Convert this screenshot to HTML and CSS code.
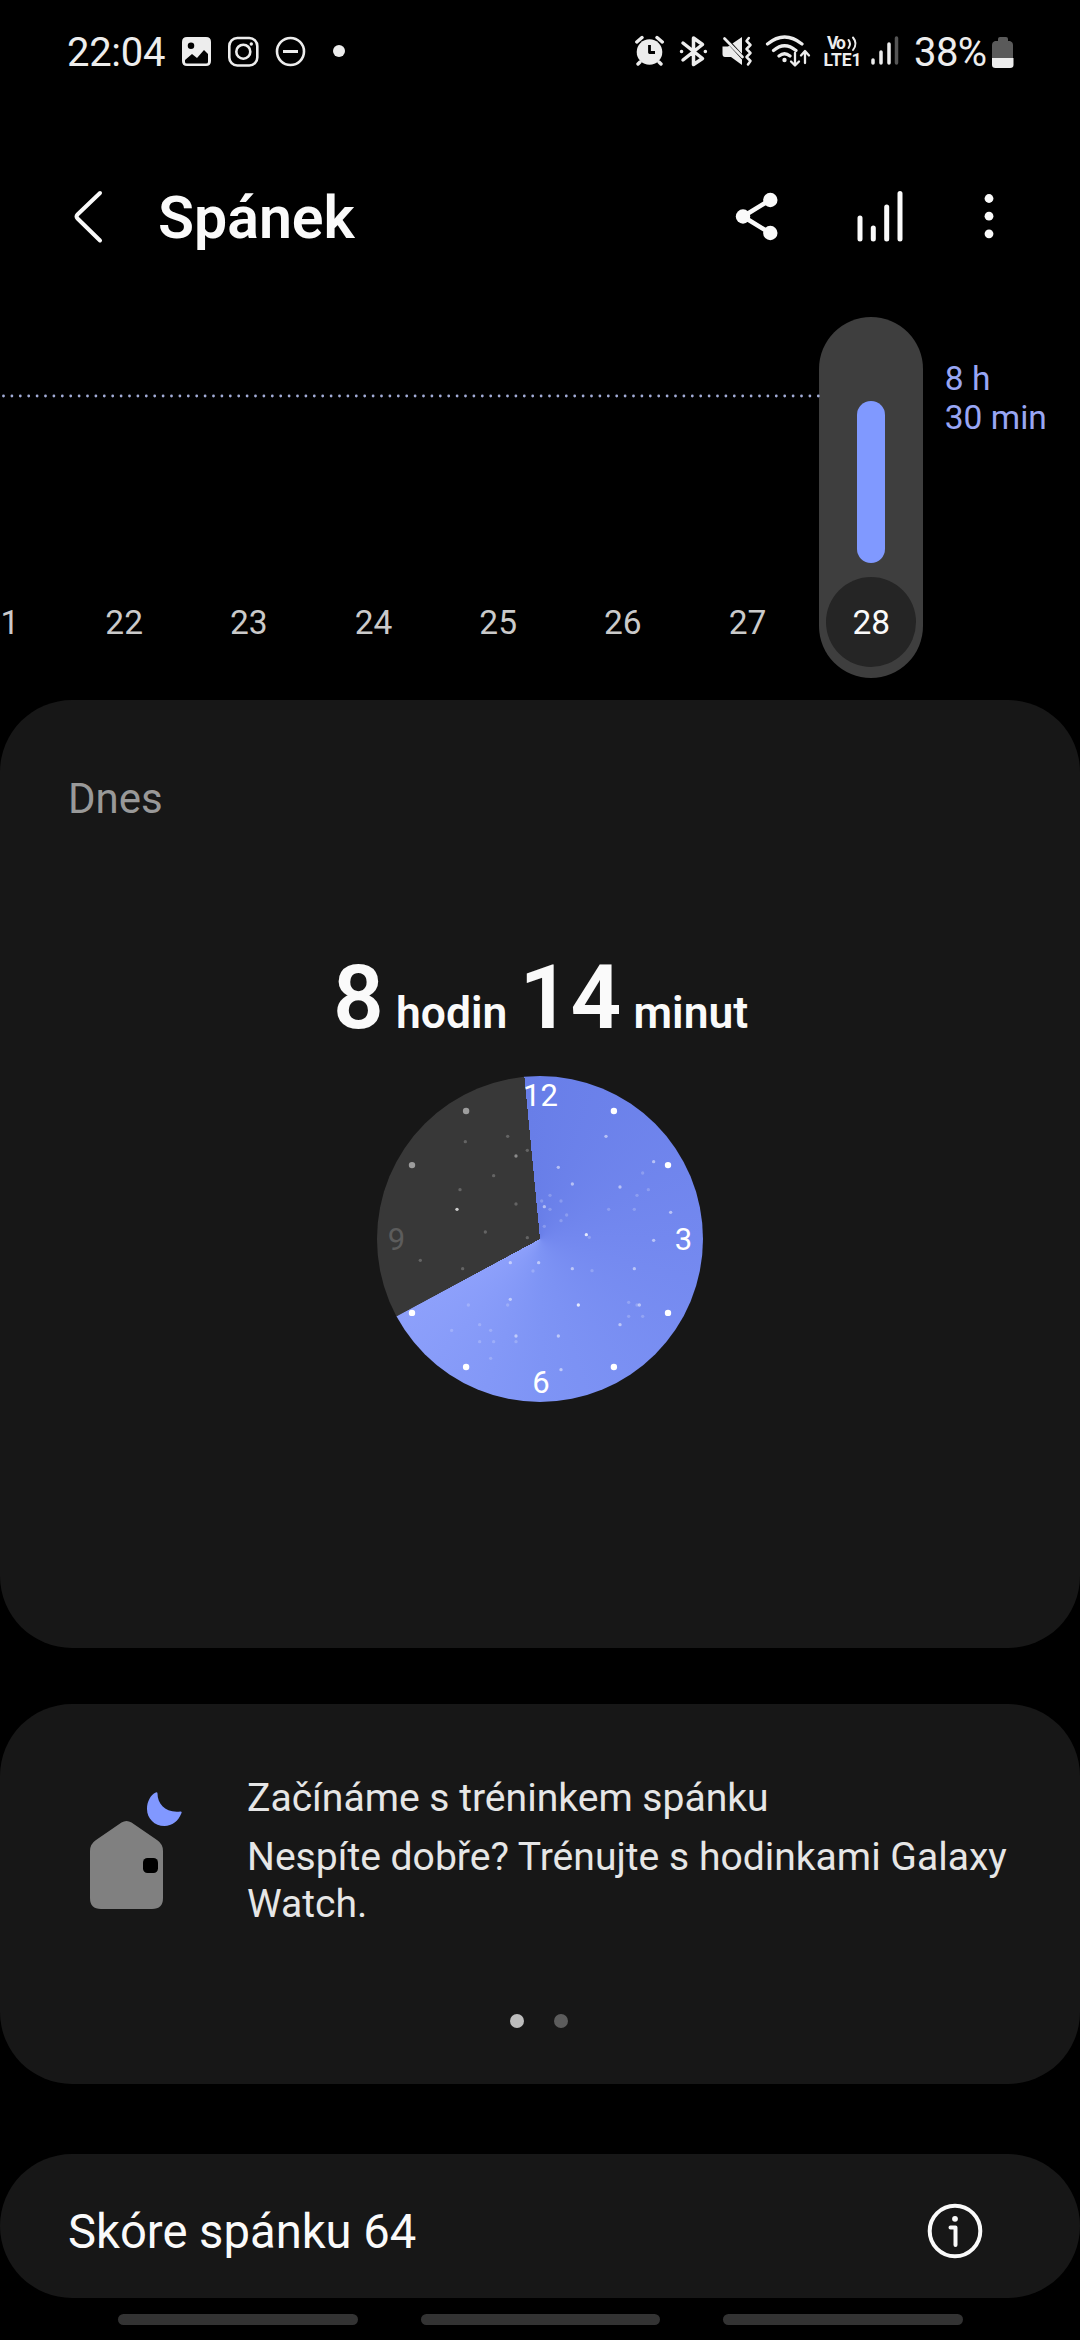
FILE: index.html
```html
<!DOCTYPE html>
<html lang="cs">
<head>
<meta charset="utf-8">
<title>Spánek</title>
<link rel="stylesheet" href="styles.css">
</head>
<body>
<div class="screen">
  <header class="status">
    <span class="status-time">22:04</span>
    <svg class="notif-icons" width="174" height="40" viewBox="0 0 174 40" fill="none" stroke="#ededed" stroke-width="2.6">
      <path fill="#ededed" stroke="none" fill-rule="evenodd" d="M5 4H24Q29 4 29 9V28Q29 33 24 33H5Q0 33 0 28V9Q0 4 5 4ZM9 9.500A3.200 3.200 0 1 0 9 16A3.200 3.200 0 1 0 9 9.500ZM3 27V29Q3 30.500 5 30.500H24Q26 30.500 26 29V21L22 17L15 25L10 21Z"/>
      <rect x="47.300" y="5" width="28" height="27.500" rx="8"/>
      <circle cx="61.300" cy="18.700" r="7"/>
      <circle cx="69.300" cy="11" r="1.700" fill="#ededed" stroke="none"/>
      <circle cx="108.500" cy="18.500" r="13.500"/>
      <path d="M101 18.500H116" stroke-width="3"/>
      <circle cx="157" cy="18" r="6" fill="#ededed" stroke="none"/>
    </svg>
    <svg class="system-icons" width="270" height="40" viewBox="0 0 270 40" fill="none" stroke="#ededed" stroke-width="3" stroke-linecap="round" stroke-linejoin="round">
      <g>
        <circle cx="14.500" cy="19" r="12.800" fill="#ededed" stroke="none"/>
        <path d="M1.800 9L7 4.500M27.300 9L22 4.500M5 29L3 31M24 29L26 31" stroke-width="3.400"/>
        <path d="M14.500 12V19.500H20" stroke="#000" stroke-width="2.800" stroke-linecap="butt"/>
      </g>
      <path d="M48 10L67.500 25.500L58.500 31.500V5L67.500 11.500L48 27M46.500 18.500H46.600M70.300 18.500H70.400" stroke-width="3.500"/>
      <g>
        <path d="M87.500 13.500H93L107 4V32L96 24H90Q87.500 24 87.500 21Z" fill="#ededed" stroke="none"/>
        <path d="M89.500 4.500L110 27" stroke="#000" stroke-width="4" stroke-linecap="butt"/>
        <path d="M89.500 5.500L107.500 24" stroke-width="2.700"/>
        <path d="M113.800 5L111.500 8L115.500 12L111.500 16L115.500 20L111.500 24L115.500 28L113 31.500" stroke-width="2.500"/>
      </g>
      <g stroke-width="3.200">
        <path d="M132.500 11Q149.500 -3 167 11M138.500 17.500Q149.500 8 161 17.500M144 23Q149.500 18.500 155 23"/>
        <circle cx="149.500" cy="27" r="2.200" fill="#ededed" stroke="none"/>
        <path d="M160 20V32M156 28.500L160 32.500L164 28.500M170 30V19M166 22.500L170 18L174 22.500" stroke-width="2.300"/>
      </g>
      <g fill="#ededed" stroke="none" class="volte">
        <text x="192" y="16" font-size="17.500" textLength="19">Vo</text>
        <text x="188.500" y="33" font-size="17.500" textLength="38">LTE1</text>
      </g>
      <path d="M213.500 7Q216.500 10.500 213.500 15M218 4.500Q223 10.500 218 17" stroke-width="2"/>
      <path d="M238 27V30M246 19V30M254 11V30" stroke-width="3.500"/>
      <path d="M261.500 5V30" stroke="#555" stroke-width="3.500"/>
    </svg>
    <span class="status-battery">38%</span>
    <svg width="22" height="32" viewBox="0 0 22 32"><path fill="#5a5a5a" d="M6 4V2Q6 0 8 0H14Q16 0 16 2V4H18Q21 5 21 8V21H0V8Q0 5 3 4Z"/><path fill="#ededed" d="M0 21H21.500V28Q21.500 31 18 31H3.500Q0 31 0 28Z"/></svg>
  </header>

  <nav class="appbar">
    <svg class="back" width="34" height="60" viewBox="0 0 34 60" fill="none" stroke="#fafafa" stroke-width="4" stroke-linecap="round" stroke-linejoin="round"><path d="M29 6L6.500 27.500Q4.500 29.500 6.500 31.500L29 53.500"/></svg>
    <h1>Spánek</h1>
    <svg class="share" width="44" height="60" viewBox="0 0 44 60" fill="#fafafa"><path d="M35 13L8 29.500L35 46" fill="none" stroke="#fafafa" stroke-width="4.600"/><circle cx="35.300" cy="13" r="7.200"/><circle cx="8" cy="29.500" r="7.200"/><circle cx="35.300" cy="46" r="7.200"/></svg>
    <svg class="bars" width="48" height="60" viewBox="0 0 48 60" stroke="#fafafa" stroke-width="5" stroke-linecap="round"><path d="M3 31V52M16.300 41V52M29.700 20V52M43 6.500V52"/></svg>
    <svg class="more" width="12" height="60" viewBox="0 0 12 60" fill="#fafafa"><circle cx="6" cy="11.500" r="4.400"/><circle cx="6" cy="29.200" r="4.400"/><circle cx="6" cy="46.800" r="4.400"/></svg>
  </nav>

  <section class="chart">
    <svg class="goal-line" width="820" height="4" viewBox="0 0 820 4"><path d="M818.300 2H-4" stroke="#a3add8" stroke-width="2.800" stroke-linecap="round" stroke-dasharray="0 8.400"/></svg>
    <span class="day first">21</span><span class="day">22</span><span class="day">23</span><span class="day">24</span><span class="day">25</span><span class="day">26</span><span class="day">27</span>
    <div class="selected">
      <div class="sleep-bar"></div>
      <span class="selected-day">28</span>
    </div>
    <p class="goal">8 h<br>30 min</p>
  </section>

  <main>
    <section class="card today">
      <h2>Dnes</h2>
      <p class="duration"><b>8</b><span class="unit hours">hodin</span><b class="mins">14</b><span class="unit">minut</span></p>
      <div class="clock">
        <svg width="326" height="326" viewBox="-163 -163 326 326">
          <g fill="#fff">
            <circle cx="73.900" cy="-128" r="3.200"/><circle cx="128" cy="-73.900" r="3.200"/><circle cx="128" cy="73.900" r="3.200"/><circle cx="73.900" cy="128" r="3.200"/><circle cx="-73.900" cy="128" r="3.200"/><circle cx="-128" cy="73.900" r="3.200"/>
          </g>
          <g fill="#9d9d9d"><circle cx="-128" cy="-73.900" r="3.200"/><circle cx="-73.900" cy="-128" r="3.200"/></g>
          <g transform="translate(-180 -179) scale(.33333)" fill="#fff">
            <g opacity=".5"><circle cx="738" cy="229" r="5"/><circle cx="595" cy="322" r="5"/><circle cx="637" cy="372" r="5"/><circle cx="780" cy="381" r="5"/><circle cx="881" cy="305" r="5"/><circle cx="553" cy="440" r="5"/><circle cx="932" cy="457" r="5"/><circle cx="881" cy="541" r="5"/><circle cx="823" cy="626" r="5"/><circle cx="637" cy="626" r="5"/><circle cx="536" cy="608" r="5"/><circle cx="451" cy="608" r="5"/><circle cx="451" cy="718" r="5"/><circle cx="780" cy="794" r="5"/><circle cx="838" cy="735" r="5"/><circle cx="595" cy="828" r="5"/><circle cx="468" cy="828" r="5"/><circle cx="603" cy="929" r="5"/></g>
            <g opacity=".8"><circle cx="679" cy="524" r="5"/><circle cx="655" cy="735" r="5"/></g>
            <g opacity=".2"><circle cx="848" cy="339" r="5"/><circle cx="865" cy="389" r="5"/><circle cx="831" cy="406" r="5"/><circle cx="823" cy="448" r="5"/><circle cx="746" cy="448" r="5"/><circle cx="570" cy="406" r="5"/><circle cx="545" cy="423" r="5"/><circle cx="603" cy="423" r="5"/><circle cx="570" cy="448" r="5"/><circle cx="620" cy="465" r="5"/><circle cx="603" cy="482" r="5"/><circle cx="553" cy="499" r="5"/><circle cx="688" cy="532" r="5"/><circle cx="696" cy="632" r="5"/><circle cx="519" cy="633" r="5"/><circle cx="443" cy="735" r="5"/><circle cx="325" cy="735" r="5"/><circle cx="359" cy="794" r="5"/><circle cx="392" cy="811" r="5"/><circle cx="275" cy="811" r="5"/><circle cx="359" cy="845" r="5"/><circle cx="401" cy="845" r="5"/><circle cx="468" cy="845" r="5"/><circle cx="392" cy="895" r="5"/><circle cx="806" cy="727" r="5"/><circle cx="806" cy="769" r="5"/><circle cx="848" cy="769" r="5"/><circle cx="831" cy="735" r="5"/></g>
            <g opacity=".22"><circle cx="316" cy="245" r="5"/><circle cx="443" cy="229" r="5"/><circle cx="502" cy="271" r="5"/><circle cx="401" cy="347" r="5"/><circle cx="300" cy="389" r="5"/><circle cx="468" cy="432" r="5"/><circle cx="376" cy="516" r="5"/><circle cx="502" cy="533" r="5"/><circle cx="181" cy="601" r="5"/><circle cx="308" cy="626" r="5"/></g>
            <circle cx="468" cy="288" r="5" opacity=".42"/><circle cx="291" cy="448" r="5" opacity=".75"/>
          </g>
          <g class="numerals"><text x="0.500" y="-133.500">12</text><text x="143.500" y="11">3</text><text x="1" y="153.500">6</text><text x="-143.500" y="11" class="dim">9</text></g>
        </svg>
      </div>
    </section>

    <section class="card coach">
      <div class="coach-row">
        <svg class="house" width="100" height="122" viewBox="0 0 100 122">
          <path fill="#808080" d="M31.500 32.500Q36.500 29.500 41.500 32.500L67 50Q73 54 73 61V108Q73 119 62 119H11Q0 119 0 108V61Q0 54 6 50Z"/>
          <rect x="53" y="68" width="15" height="15" rx="4.500" fill="#000"/>
          <path fill="#8198ff" d="M65.800 2.500Q67.300 1.800 67.500 3.500C67.500 14 76 23.500 90.500 21.500Q92.300 21.300 91.500 23C88.500 31 82 36 74.500 36C64.500 36 57 28.500 57 19C57 11.500 60.500 5 65.800 2.500Z"/>
        </svg>
        <div class="coach-text">
          <h3>Začínáme s tréninkem spánku</h3>
          <p>Nespíte dobře? Trénujte s hodinkami Galaxy Watch.</p>
        </div>
      </div>
      <div class="pager"><i class="active"></i><i></i></div>
    </section>

    <section class="card score">
      <h2>Skóre spánku 64</h2>
      <svg width="56" height="56" viewBox="0 0 56 56" fill="none" stroke="#fafafa" stroke-width="4" stroke-linecap="round" stroke-linejoin="round"><circle cx="28" cy="28" r="25.300"/><path d="M23.500 24.500H28.500V42"/><circle cx="28" cy="15.800" r="2.900" fill="#fafafa" stroke="none"/></svg>
    </section>
  </main>

  <footer class="gesture"><i></i><i></i><i></i></footer>
</div>
</body>
</html>
```

FILE: styles.css
```css
* { box-sizing: border-box; margin: 0; padding: 0; }
body { background: #000; font-family: Roboto, "Noto Sans", sans-serif; color: #fafafa; }
svg { display: block; flex: none; }
.screen { width: 1080px; height: 2340px; overflow: hidden; display: flex; flex-direction: column; }

.status { height: 100px; padding: 5px 0 0 67px; display: flex; align-items: center; color: #ededed; font-size: 40px; line-height: 48px; }
.status-time { width: 115px; letter-spacing: -.3px; }
.notif-icons { margin-right: 279px; }
.system-icons { margin-right: 9px; }
.status-battery { width: 78px; letter-spacing: -.6px; }
.volte { font-weight: 700; }

.appbar { height: 200px; padding: 87px 0 0 71px; display: flex; align-items: flex-start; }
.appbar h1 { margin: -4px 0 0 53px; width: 577px; font-size: 59px; line-height: 70px; font-weight: 600; }
.bars { margin-left: 78px; }
.more { margin-left: 78px; }

.chart { position: relative; height: 400px; padding-top: 17px; margin-left: -62.8px; display: flex; font-size: 33.5px; line-height: 39px; white-space: nowrap; }
.goal-line { position: absolute; left: 62.8px; top: 94px; }
.day { width: 124.67px; flex: none; padding-top: 286px; text-align: center; color: #cacaca; }
.day.first { padding-left: 2px; }
.selected { width: 104px; height: 361px; margin-left: 9.500px; flex: none; border-radius: 52px; background: #3e3e3e; display: flex; flex-direction: column; align-items: center; padding-top: 84px; }
.sleep-bar { width: 28px; height: 162px; border-radius: 14px; background: #8099ff; }
.selected-day { width: 90px; height: 90px; margin-top: 14px; border-radius: 50%; background: #252525; line-height: 91px; text-align: center; }
.goal { margin: 42px 0 0 21.500px; color: #98a6f4; }

.card { background: #171717; border-radius: 72px; }
.today { height: 948px; padding-top: 74px; }
.today h2 { padding-left: 68px; color: #999; font-size: 42px; line-height: 50px; font-weight: 400; }
.duration { height: 110px; margin-top: 119px; padding-left: 1px; display: flex; justify-content: center; align-items: baseline; line-height: 110px; font-weight: 600; }
.duration b { font-size: 89px; font-weight: 600; }
.unit { font-size: 44.4px; margin-left: 12.3px; }
.hours { margin-right: 12.3px; }
.clock { width: 326px; height: 326px; margin: 23px auto 0; border-radius: 50%; background: conic-gradient(from -5.500deg, #687ee8, #7388ef 95deg, #7e94f5 185deg, #8da0fb 247deg, #383838 247.300deg); }
.numerals { font-size: 31px; fill: #fff; text-anchor: middle; }
.numerals .dim { fill: #5c5c5c; }

.coach { height: 380px; margin-top: 56px; padding-top: 68px; color: #e6e6e6; }
.coach-row { display: flex; height: 220px; padding-left: 90px; }
.house { margin-top: 18px; }
.coach-text { margin: 3px 0 0 57px; width: 790px; font-size: 39.1px; line-height: 47px; }
.coach h3 { font-size: 39.1px; font-weight: 400; margin-bottom: 12px; }
.pager { display: flex; justify-content: center; gap: 30px; margin-top: 22px; padding-right: 3px; }
.pager i { width: 14px; height: 14px; border-radius: 50%; background: #5c5c5c; }
.pager .active { background: #bdbdbd; }

.score { height: 144px; margin-top: 70px; padding: 10px 97px 0 68px; display: flex; align-items: center; justify-content: space-between; }
.score h2 { font-size: 47.2px; line-height: 56px; padding-top: 2px; font-weight: 400; }

.gesture { display: flex; gap: 63px; padding: 16px 0 0 118px; }
.gesture i { width: 239.500px; height: 11px; border-radius: 5.500px; background: #333; }
```
